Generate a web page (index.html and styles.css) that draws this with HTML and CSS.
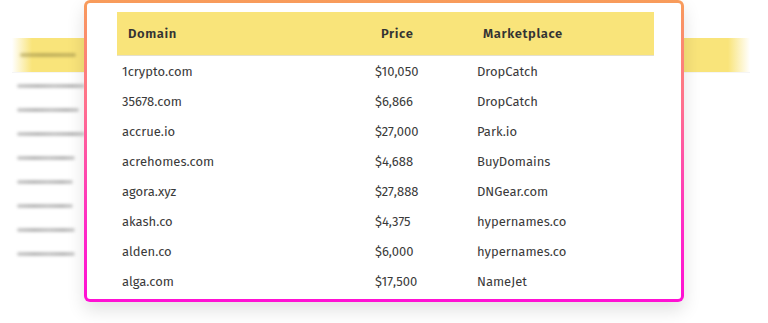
FILE: index.html
```html
<!DOCTYPE html>
<html lang="en">
<head>
<meta charset="utf-8">
<title>Domain sales</title>
<link rel="stylesheet" href="styles.css">
</head>
<body>
<div class="stage">
  <div class="backdrop" aria-hidden="true">
    <div class="band"></div>
    <div class="ghost-list">
      <span class="ghost g1 on-band"></span>
      <span class="ghost g2"></span>
      <span class="ghost g3"></span>
      <span class="ghost g4"></span>
      <span class="ghost g5"></span>
      <span class="ghost g6"></span>
      <span class="ghost g7"></span>
      <span class="ghost g8"></span>
      <span class="ghost g9"></span>
    </div>
  </div>
  <div class="card">
    <table class="sales">
      <thead>
        <tr><th class="c-domain">Domain</th><th class="c-price">Price</th><th class="c-market">Marketplace</th></tr>
      </thead>
      <tbody>
        <tr><td>1crypto.com</td><td>$10,050</td><td>DropCatch</td></tr>
        <tr><td>35678.com</td><td>$6,866</td><td>DropCatch</td></tr>
        <tr><td>accrue.io</td><td>$27,000</td><td>Park.io</td></tr>
        <tr><td>acrehomes.com</td><td>$4,688</td><td>BuyDomains</td></tr>
        <tr><td>agora.xyz</td><td>$27,888</td><td>DNGear.com</td></tr>
        <tr><td>akash.co</td><td>$4,375</td><td>hypernames.co</td></tr>
        <tr><td>alden.co</td><td>$6,000</td><td>hypernames.co</td></tr>
        <tr><td>alga.com</td><td>$17,500</td><td>NameJet</td></tr>
      </tbody>
    </table>
  </div>
</div>
</body>
</html>
```
FILE: styles.css
```css
html, body {
  margin: 0;
  padding: 0;
  background: #ffffff;
}
body {
  font-family: "Fira Sans", "Open Sans", "Noto Sans", sans-serif;
  color: #333333;
  width: 768px;
  height: 323px;
  overflow: hidden;
}
.stage {
  position: relative;
  width: 768px;
  height: 323px;
}
.backdrop {
  position: absolute;
  inset: 0;
}
.band {
  position: absolute;
  left: 12px;
  top: 38px;
  width: 738px;
  height: 34px;
  background: linear-gradient(90deg, rgba(249,228,122,0) 0, #f9e47a 20px, #f9e47a 716px, rgba(249,228,122,0) 738px);
  box-shadow: 0 1px 0 rgba(0,0,0,0.04);
}
.ghost-list {
  position: absolute;
  left: 17px;
  top: 53px;
  display: flex;
  flex-direction: column;
}
.ghost {
  display: block;
  height: 4px;
  border-radius: 2px;
  background: linear-gradient(90deg, #a8a8a8 0, #8e8e8e 30%, #a0a0a0 55%, #8c8c8c 80%, #b0b0b0 100%);
  filter: blur(1.6px);
  opacity: 0.6;
  margin-bottom: 20px;
}
.ghost.on-band {
  background: linear-gradient(90deg, #b0a255 0, #9c8f48 40%, #a89a50 100%);
  margin-bottom: 27px;
}
.g1 { width: 56px; margin-left: 3px; }
.g2 { width: 68px; }
.g3 { width: 62px; }
.g4 { width: 68px; }
.g5 { width: 58px; }
.g6 { width: 56px; }
.g7 { width: 56px; }
.g8 { width: 58px; }
.g9 { width: 58px; }
.card {
  position: relative;
  margin-left: 84px;
  width: 600px;
  height: 302px;
  box-sizing: border-box;
  border: 3px solid transparent;
  border-radius: 6px;
  background:
    linear-gradient(#ffffff, #ffffff) padding-box,
    linear-gradient(180deg, #f89c5a 0%, #ff6f8e 35%, #ff2ac6 75%, #ff10d4 100%) border-box;
  box-shadow: 0 8px 18px rgba(0,0,0,0.12);
  padding: 9px 27px 0 30px;
}
.sales {
  width: 537px;
  border-collapse: collapse;
  font-size: 13px;
}
.sales thead tr {
  background: #f9e47a;
}
.sales th {
  height: 43px;
  padding: 0 0 0 11px;
  text-align: left;
  font-weight: 600;
  letter-spacing: 0.6px;
  color: #333333;
  border-bottom: 1px solid #e4e0cc;
}
.sales th.c-domain { width: 242px; }
.sales th.c-price { width: 91px; }
.sales td {
  height: 30px;
  padding: 0 0 0 5px;
  color: #3a3a3a;
}
```
